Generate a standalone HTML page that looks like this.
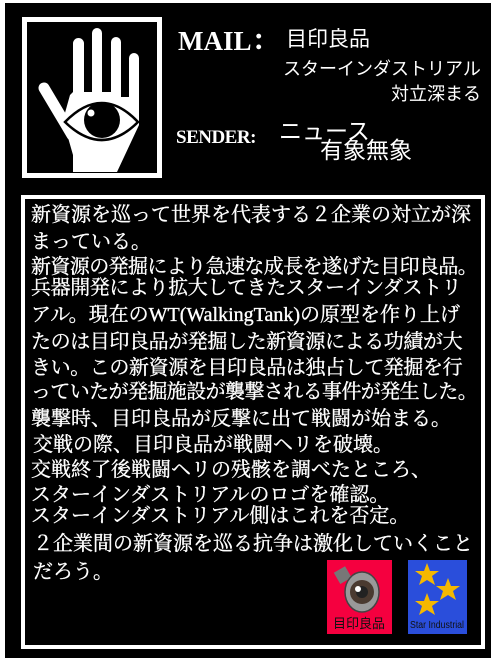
<!DOCTYPE html>
<html><head><meta charset="utf-8"><style>
html,body{margin:0;padding:0;background:#fff;}
#p{position:relative;width:495px;height:664px;overflow:hidden;background:#fff;}
#bg{position:absolute;left:5px;top:3px;width:486px;height:655px;background:#000;}
.t{position:absolute;white-space:nowrap;color:#fff;font-family:"Liberation Serif","Noto Serif CJK SC",serif;line-height:1;}
.s{font-family:"Liberation Sans","Noto Sans CJK JP",sans-serif;}
#box{position:absolute;left:21px;top:195px;width:456px;height:446px;border:4px solid #fff;}
.l{position:absolute;left:31px;font-size:20px;white-space:nowrap;color:#fff;font-family:"Liberation Serif","Noto Serif CJK SC",serif;line-height:20px;-webkit-text-stroke:0.35px #fff;}
</style></head><body><div id="p">
<div id="bg"></div>
<svg style="position:absolute;left:0;top:0" width="495" height="200">
<rect x="24.5" y="19.5" width="135" height="156" fill="#000" stroke="#fff" stroke-width="5"/>
<g fill="#fff">
<rect x="73" y="38" width="11" height="70" rx="5.5"/>
<rect x="92" y="28" width="10" height="80" rx="5"/>
<rect x="111" y="37" width="10" height="70" rx="5"/>
<rect x="129" y="53" width="10" height="60" rx="5"/>
<polygon points="73,92 139,92 139,125 117,172 73,172 73,155 63,120 70,95"/>
</g>
<line x1="44" y1="88" x2="72" y2="135" stroke="#fff" stroke-width="11" stroke-linecap="round"/>
<rect x="84" y="60" width="8" height="32" fill="#000"/>
<rect x="102" y="60" width="9" height="32" fill="#000"/>
<rect x="121" y="70" width="8" height="27" fill="#000"/>
<path d="M65,122 Q102,84 138,122 Q102,158 65,122 Z" fill="#fff" stroke="#000" stroke-width="2.5"/>
<circle cx="102" cy="120" r="18" fill="#000"/>
<circle cx="91" cy="113" r="3.5" fill="#fff"/>
</svg>
<div class="t" style="left:178px;top:28px;font-size:27px;font-weight:bold;">MAIL：</div>
<div class="t s" style="left:286px;top:29px;font-size:21px;">目印良品</div>
<div class="t s" style="left:283px;top:60px;font-size:18px;">スターインダストリアル</div>
<div class="t s" style="left:391px;top:85px;font-size:18px;">対立深まる</div>
<div class="t" style="left:176px;top:128px;font-size:19px;font-weight:bold;letter-spacing:-0.5px;">SENDER:</div>
<div class="t s" style="left:279px;top:120px;font-size:23px;">ニュース</div>
<div class="t s" style="left:320px;top:139px;font-size:23px;">有象無象</div>
<div id="box"></div>
<div class="l" style="top:205px">新資源を巡って世界を代表する２企業の対立が深</div>
<div class="l" style="top:232px">まっている。</div>
<div class="l" style="top:257px;letter-spacing:-0.6px">新資源の発掘により急速な成長を遂げた目印良品。</div>
<div class="l" style="top:278px;letter-spacing:-0.4px">兵器開発により拡大してきたスターインダストリ</div>
<div class="l" style="top:305px">アル。現在のWT(WalkingTank)の原型を作り上げ</div>
<div class="l" style="top:332px;letter-spacing:-0.4px">たのは目印良品が発掘した新資源による功績が大</div>
<div class="l" style="top:358px;letter-spacing:-0.4px">きい。この新資源を目印良品は独占して発掘を行</div>
<div class="l" style="top:382px;letter-spacing:-0.6px">っていたが発掘施設が襲撃される事件が発生した。</div>
<div class="l" style="top:409px">襲撃時、目印良品が反撃に出て戦闘が始まる。</div>
<div class="l" style="top:435px;left:33px">交戦の際、目印良品が戦闘ヘリを破壊。</div>
<div class="l" style="top:460px">交戦終了後戦闘ヘリの残骸を調べたところ、</div>
<div class="l" style="top:485px">スターインダストリアルのロゴを確認。</div>
<div class="l" style="top:506px">スターインダストリアル側はこれを否定。</div>
<div class="l" style="top:534px;left:33px">２企業間の新資源を巡る抗争は激化していくこと</div>
<div class="l" style="top:562px;left:33px">だろう。</div>
<svg style="position:absolute;left:327px;top:560px" width="65" height="74">
<rect width="65" height="74" fill="#f5003f"/>
<rect x="9" y="9" width="13" height="13" fill="#777" transform="rotate(-30 15 15)"/>
<ellipse cx="35" cy="32" rx="17" ry="20" fill="#999" stroke="#444" stroke-width="1.5"/>
<circle cx="35" cy="32" r="12" fill="#4a3a30"/>
<circle cx="35" cy="32" r="6" fill="#222"/>
<circle cx="31" cy="29" r="3" fill="#fff"/>
<text x="32" y="68" font-size="13" fill="#111" text-anchor="middle" font-family="Liberation Sans,Noto Sans CJK JP,sans-serif">目印良品</text>
</svg>
<svg style="position:absolute;left:408px;top:560px" width="59" height="74">
<rect width="59" height="74" fill="#2a4edb"/>
<g fill="#f5b800">
<polygon points="19,3 22,11 31,11 24,16 27,25 19,20 11,25 14,16 7,11 16,11"/>
<polygon points="40,18 43,26 52,26 45,31 48,40 40,35 32,40 35,31 28,26 37,26"/>
<polygon points="19,33 22,41 31,41 24,46 27,55 19,50 11,55 14,46 7,41 16,41"/>
</g>
<text x="29" y="68" font-size="10" fill="#111" text-anchor="middle" font-family="Liberation Sans,sans-serif" textLength="54" lengthAdjust="spacingAndGlyphs">Star Industrial</text>
</svg>
</div></body></html>
